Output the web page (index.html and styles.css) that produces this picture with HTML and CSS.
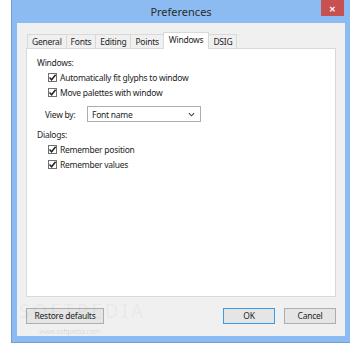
FILE: index.html
```html
<!DOCTYPE html>
<html lang="en">
<head>
    <meta charset="UTF-8">
    <title>Preferences</title>
    <link rel="stylesheet" href="styles.css">
</head>
<body>
    <div class="window">
        <!-- Title bar -->
        <div class="titlebar">
            <span class="title">Preferences</span>
            <span class="close">&#x2715;</span>
        </div>

        <div class="frame">
            <div class="tabs">
                <span class="tab">General</span>
                <span class="tab">Fonts</span>
                <span class="tab">Editing</span>
                <span class="tab">Points</span>
                <span class="tab active">Windows</span>
                <span class="tab">DSIG</span>
            </div>

            <div class="panel">
                <div class="group-label">Windows:</div>
                <label class="check"><span class="box"><svg viewBox="0 0 9 9"><path d="M1.5 4.6 L3.6 6.8 L7.6 1.8" /></svg></span>Automatically fit glyphs to window</label>
                <label class="check"><span class="box"><svg viewBox="0 0 9 9"><path d="M1.5 4.6 L3.6 6.8 L7.6 1.8" /></svg></span>Move palettes with window</label>

                <div class="row">
                    <span class="row-label">View by:</span>
                    <div class="select">
                        <span>Font name</span>
                        <svg viewBox="0 0 8 5"><path d="M1 1 L4 4 L7 1" /></svg>
                    </div>
                </div>

                <div class="group-label">Dialogs:</div>
                <label class="check"><span class="box"><svg viewBox="0 0 9 9"><path d="M1.5 4.6 L3.6 6.8 L7.6 1.8" /></svg></span>Remember position</label>
                <label class="check"><span class="box"><svg viewBox="0 0 9 9"><path d="M1.5 4.6 L3.6 6.8 L7.6 1.8" /></svg></span>Remember values</label>
            </div>

            <div class="footer">
                <span class="btn btn-wide">Restore defaults</span>
                <span class="spacer"></span>
                <span class="btn btn-default">OK</span>
                <span class="btn">Cancel</span>
            </div>

            <!-- watermark -->
            <span class="mark">SOFTPEDIA</span>
            <span class="mark-url">www.softpedia.com</span>
        </div>
    </div>
</body>
</html>
```

FILE: styles.css
```css
body {
    margin: 0;
    background: #ffffff;
    font-family: 'Noto Sans', 'Open Sans', sans-serif;
    font-size: 8.5px;
    letter-spacing: -0.25px;
    color: #1e1e1e;
}

.window {
    margin-left: 11px;
    width: 341px;
    background: #8cbbf2;
    border: 1px solid #6f9fd6;
    border-top: none;
    box-sizing: border-box;
    padding: 0 6px 6px 5px;
}

.titlebar {
    height: 23px;
    display: flex;
    align-items: center;
    justify-content: center;
    position: relative;
}

.title {
    font-size: 11px;
    letter-spacing: 0;
    color: #2b2b2b;
    margin-top: -1px;
}

.close {
    position: absolute;
    right: 1px;
    top: 0;
    width: 23px;
    height: 16px;
    background: #c75050;
    color: #ffffff;
    font-size: 8px;
    font-weight: bold;
    display: flex;
    align-items: center;
    justify-content: center;
}

.frame {
    background: #f0f0f0;
    padding: 9px 9px 12px 9px;
    position: relative;
}

.tabs {
    display: flex;
    align-items: flex-end;
    height: 16px;
    padding-left: 1px;
}

.tab {
    height: 14px;
    line-height: 13px;
    padding: 0 4px;
    border: 1px solid #d9d9d9;
    border-bottom: none;
    margin-right: -1px;
    background: #f0f0f0;
    box-sizing: border-box;
}

.tab.active {
    background: #ffffff;
    position: relative;
    z-index: 1;
    margin-bottom: -1px;
    height: 17px;
    padding: 0 5px;
}

.panel {
    background: #ffffff;
    border: 1px solid #d9d9d9;
    height: 249px;
    box-sizing: border-box;
    padding: 7px 10px;
}

.group-label {
    height: 14px;
    line-height: 14px;
}

.check {
    display: flex;
    align-items: center;
    height: 15px;
    padding-left: 11px;
}

.box {
    width: 9px;
    height: 9px;
    border: 1px solid #707070;
    background: #ffffff;
    box-sizing: border-box;
    margin-right: 3px;
    display: flex;
}

.box svg {
    width: 9px;
    height: 9px;
    margin: -1px;
}

.box path {
    fill: none;
    stroke: #222;
    stroke-width: 1.5;
}

.row {
    display: flex;
    align-items: center;
    margin: 6px 0 6px 8px;
}

.row-label {
    width: 42px;
}

.select {
    width: 114px;
    height: 16px;
    border: 1px solid #acacac;
    box-sizing: border-box;
    display: flex;
    align-items: center;
    justify-content: space-between;
    padding: 0 5px 0 4px;
}

.select svg {
    width: 7px;
    height: 5px;
}

.select path {
    fill: none;
    stroke: #444;
    stroke-width: 1.3;
}

.footer {
    display: flex;
    align-items: center;
    margin-top: 11px;
}

.spacer {
    flex: 1;
}

.btn {
    width: 52px;
    height: 16px;
    line-height: 14px;
    border: 1px solid #adadad;
    background: #e5e5e5;
    box-sizing: border-box;
    text-align: center;
}

.btn-wide {
    width: 78px;
}

.btn-default {
    border-color: #3c9be6;
    margin-right: 9px;
}

.mark {
    position: absolute;
    left: 2px;
    bottom: 12px;
    font-size: 19px;
    letter-spacing: 3px;
    color: rgba(0, 0, 0, 0.05);
}

.mark-url {
    position: absolute;
    left: 22px;
    bottom: 0;
    font-size: 7px;
    color: rgba(0, 0, 0, 0.12);
}
```
